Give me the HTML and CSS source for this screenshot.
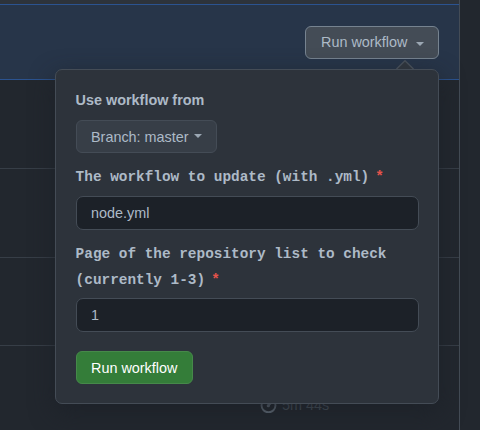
FILE: index.html
```
<!DOCTYPE html>
<html lang="en">
<head>
<meta charset="utf-8">
<title>Run workflow</title>
<link rel="stylesheet" href="styles.css">
</head>
<body>
<div class="panel">
  <div class="strip"></div>
  <div class="banner"><button class="btn btn-run"><span class="text">Run workflow</span><span class="caret"></span></button></div>
  <div class="row"></div>
  <div class="row"></div>
  <div class="row"></div>
  <div class="row row-last">
    <svg class="watch" viewBox="0 0 17 17" width="17" height="17"><circle cx="8.500" cy="9.300" r="7"/><path d="M8.500 2.700V1M6.500 1h4M13.500 4.500l1-1M8.500 9.500l2.200-2.200"/><circle class="hub" cx="8.300" cy="9.700" r="1.600"/></svg>
    <span>5m 44s</span>
  </div>
</div>
<div class="popover">
  <svg class="arrow" width="18" height="9" viewBox="0 0 18 9"><path class="arrow-fill" d="M0 9 9 .5 18 9z"/><path class="arrow-line" d="M.5 9 9 .7 17.500 9"/></svg>
  <div class="title">Use workflow from</div>
  <button class="btn btn-branch">Branch: master<span class="caret"></span></button>
  <label class="label" for="workflow">The workflow to update (with .yml)<span class="req">*</span></label>
  <input class="input" id="workflow" type="text" value="node.yml">
  <label class="label label-long" for="page"><span class="line">Page of the repository list to check</span> <span class="line">(currently 1-3)<span class="req">*</span></span></label>
  <input class="input" id="page" type="text" value="1">
  <button class="btn btn-submit">Run workflow</button>
</div>
</body>
</html>
```
FILE: styles.css
```
* { box-sizing: border-box; }
body {
  margin: 0;
  height: 430px;
  overflow: hidden;
  background: #22272e;
  color: #adbac7;
  font: 14.4px/22px "Liberation Sans", Arial, sans-serif;
}
.panel {
  width: 460px;
  height: 430px;
  border-right: 1px solid #444c56;
  overflow: hidden;
}
.strip { height: 4px; background: #2d333b; }
.banner {
  display: flex;
  justify-content: flex-end;
  align-items: flex-start;
  height: 76px;
  padding: 21px 20px 0 0;
  background: #273549;
  border: solid #2b5390;
  border-width: 1px 0;
}
.row { height: 89px; border-bottom: 1px solid #373e47; }
.row:nth-child(5) { height: 88px; }
.row-last {
  display: flex;
  align-items: flex-start;
  gap: 5px;
  height: 84px;
  padding: 50px 0 0 260px;
  border: 0;
  color: #535c68;
}
.row-last span { line-height: 18px; }
.watch { fill: none; stroke: #717d8a; stroke-width: 1.9; stroke-linecap: round; }
.watch .hub { fill: #717d8a; stroke: none; }
.btn {
  display: flex;
  align-items: center;
  height: 33px;
  padding: 0 15px;
  border: 1px solid #444c56;
  border-radius: 6px;
  background: #373e47;
  color: #adbac7;
  font: inherit;
  white-space: nowrap;
}
.btn-run {
  width: 134px;
  border-color: #768390;
  background: #444c56;
}
.btn-run .text { padding-bottom: 2px; }
.caret {
  margin: 0 0 2px 5px;
  border: 4px solid transparent;
  border-top-color: #9ba7b3;
  border-bottom: 0;
}
.btn-run .caret { margin: 3px 0 0 9px; }
.popover {
  position: absolute;
  top: 69px;
  left: 55px;
  width: 384px;
  height: 335px;
  padding: 20px;
  border: 1px solid #444c56;
  border-radius: 7px;
  background: #2d333b;
  box-shadow: 0 8px 24px rgba(28, 33, 40, 0.85);
}
.arrow { position: absolute; top: -10px; left: 340px; }
.arrow-fill { fill: #2d333b; }
.arrow-line { fill: none; stroke: #444c56; stroke-width: 1.4; }
.title { height: 30px; line-height: 21px; font-weight: 700; text-indent: -0.4px; }
.btn-branch { width: 141px; padding: 0 14px; }
.label {
  display: block;
  margin-top: 11px;
  padding-bottom: 6px;
  font: 700 14.4px/26px "Liberation Mono", "Courier New", monospace;
  text-indent: -0.4px;
}
.label-long { padding-bottom: 5px; }
.line { display: block; }
.req { margin-left: 6px; color: #e5534b; }
.input {
  display: block;
  width: 343px;
  height: 34px;
  padding: 0 14px;
  border: 1px solid #444c56;
  border-radius: 7px;
  background: #1c2128;
  color: #adbac7;
  font: inherit;
}
.btn-submit {
  width: 117px;
  margin-top: 19px;
  padding: 0 14px;
  border-color: #46894a;
  background: #347d39;
  color: #fff;
}
```
